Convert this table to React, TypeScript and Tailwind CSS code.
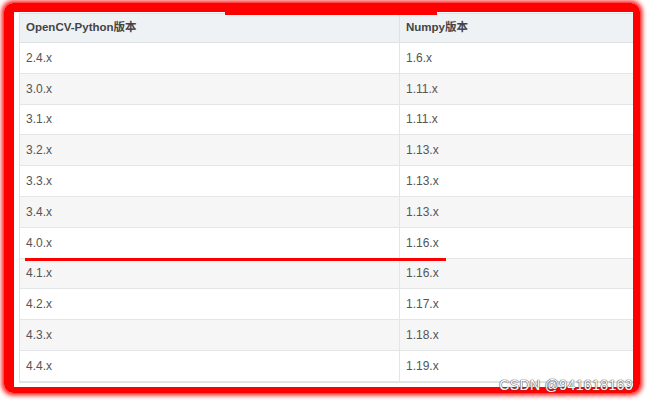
import React from "react";

const rows: [string, string][] = [
  ["2.4.x", "1.6.x"],
  ["3.0.x", "1.11.x"],
  ["3.1.x", "1.11.x"],
  ["3.2.x", "1.13.x"],
  ["3.3.x", "1.13.x"],
  ["3.4.x", "1.13.x"],
  ["4.0.x", "1.16.x"],
  ["4.1.x", "1.16.x"],
  ["4.2.x", "1.17.x"],
  ["4.3.x", "1.18.x"],
  ["4.4.x", "1.19.x"],
];

export default function App() {
  return (
    <div
      className="relative w-[647px] h-[402px] bg-white overflow-hidden pt-[3px] pl-[4px]"
      style={{ fontFamily: '"Liberation Sans", "Noto Sans CJK SC", Arial, sans-serif' }}
    >
      <div className="w-[636px] h-[390px] rounded-[9px] border-[#ff0000] border-l-[10px] border-t-[9px] border-r-[7px] border-b-[6px] shadow-[0_0_5px_2px_#ff0000]">
        <div className="w-full h-full bg-white overflow-hidden pl-[5px] pt-[1px] pb-[7px]">
          <div className="w-[630px] border border-[#dfe2e5] border-r-0">
            <div className="flex h-[29px] bg-[#eff2f5] border-b border-[#dfe2e5] text-[11.5px] font-bold text-[#444]">
              <div className="w-[380px] shrink-0 border-r border-[#dfe2e5] pl-[6px] flex items-center">
                OpenCV-Python版本
              </div>
              <div className="flex-1 pl-[6px] flex items-center">Numpy版本</div>
            </div>
            {rows.map(([a, b], i) => (
              <div
                key={a}
                className={
                  "flex h-[30.8px] border-b border-[#e3e5e8] text-[12px] text-[#555] " +
                  (i % 2 === 1 ? "bg-[#f6f6f6]" : "bg-white")
                }
              >
                <div className="w-[380px] shrink-0 border-r border-[#e3e5e8] pl-[6px] flex items-center">
                  {a}
                </div>
                <div className="flex-1 pl-[6px] flex items-center">{b}</div>
              </div>
            ))}
          </div>
        </div>
      </div>
      <div className="absolute left-[225px] top-[12px] w-[212px] h-[3px] bg-[#ff0000]" />
      <div className="absolute left-[25px] top-[258px] w-[421px] h-[3px] bg-[#ff0000]" />
      <div
        className="absolute right-[14px] top-[377px] text-[14px] leading-[16px] text-white tracking-[0.4px]"
        style={{ textShadow: "0 0 1px #555, 0 0 1px #555, 0 0 1px #555" }}
      >
        CSDN @941618163
      </div>
    </div>
  );
}
